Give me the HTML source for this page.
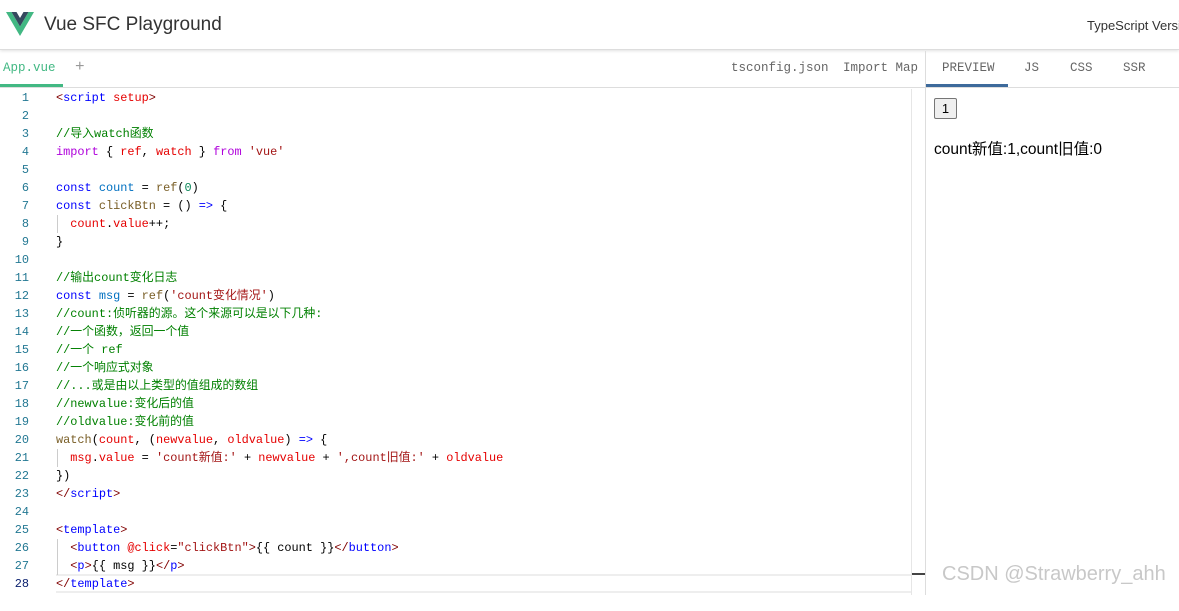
<!DOCTYPE html>
<html><head><meta charset="utf-8"><style>
*{margin:0;padding:0;box-sizing:border-box}
body{width:1179px;height:595px;overflow:hidden;background:#fff;font-family:"Liberation Sans","Noto Sans CJK SC",sans-serif;position:relative}
.hdr{position:absolute;left:0;top:0;width:1179px;height:50px;border-bottom:1px solid #ddd;box-shadow:0 1px 3px rgba(0,0,0,.12)}
.title{position:absolute;left:44px;top:14px;font-size:19px;color:#333}
.ts{position:absolute;left:1087px;top:18px;font-size:13px;color:#333;white-space:nowrap}
.tabs{position:absolute;top:51px;height:37px;border-bottom:1px solid #ddd;font-family:"Liberation Mono",monospace;font-size:12.5px;color:#666}
.tabs span{position:absolute;top:10px;white-space:nowrap}
.code{position:absolute;left:0;top:89px;font-family:"Liberation Mono","Noto Sans CJK SC",monospace;font-size:11.9px;line-height:18px;white-space:pre}
.ln{position:absolute;left:0;width:29px;text-align:right;color:#237893}
.cl{position:absolute;left:56px}
.c{color:#008000}.k{color:#0000ff}.p{color:#af00db}.v{color:#0070c1}.f{color:#795e26}.s{color:#a31515}.r{color:#e50000}.t{color:#800000}.n{color:#098658}
.guide{position:absolute;left:57px;width:1px;background:#ccc}
</style></head><body>
<div class="hdr">
<svg style="position:absolute;left:6px;top:12px" width="28" height="25" viewBox="0 0 28 25"><path d="M0 0h5.5L14 14.5 22.5 0H28L14 24z" fill="#42b883"/><path d="M5.5 0h5L14 6l3.5-6h5L14 14.5z" fill="#35495e"/></svg>
<div class="title">Vue SFC Playground</div>
<div class="ts">TypeScript Version</div>
</div>
<div class="tabs" style="left:0;width:925px">
<span style="left:3px;color:#42b883">App.vue</span>
<div style="position:absolute;left:0;top:33px;width:63px;height:3px;background:#42b883"></div>
<span style="left:75px;font-size:16px;top:7px;color:#999">+</span>
<span style="left:731px">tsconfig.json</span>
<span style="left:843px">Import Map</span>
</div>
<div style="position:absolute;left:925px;top:51px;width:1px;height:544px;background:#ddd"></div>
<div class="tabs" style="left:926px;width:253px">
<span style="left:16px">PREVIEW</span>
<span style="left:98px">JS</span>
<span style="left:144px">CSS</span>
<span style="left:197px">SSR</span>
<div style="position:absolute;left:0;top:33px;width:82px;height:3px;background:#3d6a9b"></div>
</div>
<div style="position:absolute;left:911px;top:89px;width:1px;height:506px;background:#e6e6e6"></div>
<div style="position:absolute;left:912px;top:573px;width:13px;height:2px;background:#444"></div>
<div style="position:absolute;left:56px;top:574px;width:855px;height:19px;border-top:2px solid #eee;border-bottom:2px solid #eee"></div>
<div style="position:absolute;left:934px;top:98px;width:23px;height:21px;border:1px solid #767676;border-radius:2px;background:#efefef;font-size:13px;text-align:center;line-height:19px">1</div>
<div style="position:absolute;left:934px;top:137px;font-size:15.5px;color:#000">count新值:1,count旧值:0</div>
<div style="position:absolute;left:942px;top:563px;font-size:20px;color:#c8c8c8">CSDN @Strawberry_ahh</div>
<div class="guide" style="top:215px;height:18px"></div>
<div class="guide" style="top:449px;height:18px"></div>
<div class="guide" style="top:539px;height:36px"></div>
<div class="code">
<div class="ln" style="top:0">1</div><div class="cl" style="top:0"><span class="t">&lt;</span><span class="k">script</span> <span class="r">setup</span><span class="t">&gt;</span></div>
<div class="ln" style="top:18px">2</div>
<div class="ln" style="top:36px">3</div><div class="cl c" style="top:36px">//导入watch函数</div>
<div class="ln" style="top:54px">4</div><div class="cl" style="top:54px"><span class="p">import</span> { <span class="r">ref</span>, <span class="r">watch</span> } <span class="p">from</span> <span class="s">'vue'</span></div>
<div class="ln" style="top:72px">5</div>
<div class="ln" style="top:90px">6</div><div class="cl" style="top:90px"><span class="k">const</span> <span class="v">count</span> = <span class="f">ref</span>(<span class="n">0</span>)</div>
<div class="ln" style="top:108px">7</div><div class="cl" style="top:108px"><span class="k">const</span> <span class="f">clickBtn</span> = () <span class="k">=&gt;</span> {</div>
<div class="ln" style="top:126px">8</div><div class="cl" style="top:126px">  <span class="r">count</span>.<span class="r">value</span>++;</div>
<div class="ln" style="top:144px">9</div><div class="cl" style="top:144px">}</div>
<div class="ln" style="top:162px">10</div>
<div class="ln" style="top:180px">11</div><div class="cl c" style="top:180px">//输出count变化日志</div>
<div class="ln" style="top:198px">12</div><div class="cl" style="top:198px"><span class="k">const</span> <span class="v">msg</span> = <span class="f">ref</span>(<span class="s">'count变化情况'</span>)</div>
<div class="ln" style="top:216px">13</div><div class="cl c" style="top:216px">//count:侦听器的源。这个来源可以是以下几种:</div>
<div class="ln" style="top:234px">14</div><div class="cl c" style="top:234px">//一个函数，返回一个值</div>
<div class="ln" style="top:252px">15</div><div class="cl c" style="top:252px">//一个 ref</div>
<div class="ln" style="top:270px">16</div><div class="cl c" style="top:270px">//一个响应式对象</div>
<div class="ln" style="top:288px">17</div><div class="cl c" style="top:288px">//...或是由以上类型的值组成的数组</div>
<div class="ln" style="top:306px">18</div><div class="cl c" style="top:306px">//newvalue:变化后的值</div>
<div class="ln" style="top:324px">19</div><div class="cl c" style="top:324px">//oldvalue:变化前的值</div>
<div class="ln" style="top:342px">20</div><div class="cl" style="top:342px"><span class="f">watch</span>(<span class="r">count</span>, (<span class="r">newvalue</span>, <span class="r">oldvalue</span>) <span class="k">=&gt;</span> {</div>
<div class="ln" style="top:360px">21</div><div class="cl" style="top:360px">  <span class="r">msg</span>.<span class="r">value</span> = <span class="s">'count新值:'</span> + <span class="r">newvalue</span> + <span class="s">',count旧值:'</span> + <span class="r">oldvalue</span></div>
<div class="ln" style="top:378px">22</div><div class="cl" style="top:378px">})</div>
<div class="ln" style="top:396px">23</div><div class="cl" style="top:396px"><span class="t">&lt;/</span><span class="k">script</span><span class="t">&gt;</span></div>
<div class="ln" style="top:414px">24</div>
<div class="ln" style="top:432px">25</div><div class="cl" style="top:432px"><span class="t">&lt;</span><span class="k">template</span><span class="t">&gt;</span></div>
<div class="ln" style="top:450px">26</div><div class="cl" style="top:450px">  <span class="t">&lt;</span><span class="k">button</span> <span class="r">@click</span>=<span class="s">"clickBtn"</span><span class="t">&gt;</span>{{ count }}<span class="t">&lt;/</span><span class="k">button</span><span class="t">&gt;</span></div>
<div class="ln" style="top:468px">27</div><div class="cl" style="top:468px">  <span class="t">&lt;</span><span class="k">p</span><span class="t">&gt;</span>{{ msg }}<span class="t">&lt;/</span><span class="k">p</span><span class="t">&gt;</span></div>
<div class="ln" style="top:486px;color:#0b216f">28</div><div class="cl" style="top:486px"><span class="t">&lt;/</span><span class="k">template</span><span class="t">&gt;</span></div>
</div>
</body></html>
